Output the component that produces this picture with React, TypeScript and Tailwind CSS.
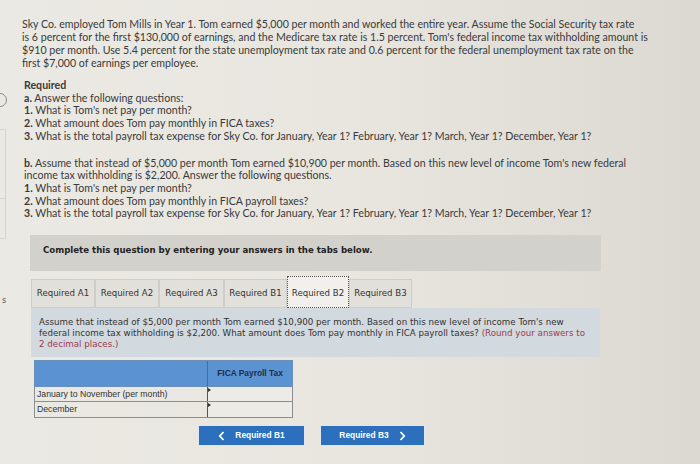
import React from "react";

const Chev = ({ dir }: { dir: "l" | "r" }) => (
  <svg width="7" height="10" viewBox="0 0 7 10" className="shrink-0">
    {dir === "l" ? (
      <path d="M5.5 1 L1.8 5 L5.5 9" fill="none" stroke="white" strokeWidth="1.8" />
    ) : (
      <path d="M1.5 1 L5.2 5 L1.5 9" fill="none" stroke="white" strokeWidth="1.8" />
    )}
  </svg>
);

export default function App() {
  const tabs = ["Required A1", "Required A2", "Required A3", "Required B1", "Required B2", "Required B3"];
  const widths = [64, 64, 65, 63, 62, 63];
  return (
    <div className="w-[700px] h-[464px] overflow-hidden flex bg-gradient-to-r from-[#ebe9e3] via-[#e8e6df] to-[#dcd9d2] text-[#333]">
      {/* left edge fragments */}
      <div className="w-[22px] shrink-0 flex flex-col">
        <div className="mt-[93px] -ml-[7px] w-[14px] h-[14px] rounded-full border border-[#8a8a8a]" />
        <div className="mt-[22px] h-[70px] border-r border-t border-b border-[#d6d4ce] w-[6px]" />
        <div className="h-[40px] border-r border-b border-[#d6d4ce] w-[6px]" />
        <div className="mt-[57px] pl-[2px] text-[8px] leading-[10px] text-[#555] font-['DejaVu_Sans',sans-serif]">s</div>
      </div>

      <div className="flex flex-col font-['Lato','Open_Sans',sans-serif]">
        <p className="pt-[18px] text-[10.6px] leading-[13px] text-[#3a3a3a]">
          Sky Co. employed Tom Mills in Year 1. Tom earned $5,000 per month and worked the entire year. Assume the Social Security tax rate
          <br />
          is 6 percent for the first $130,000 of earnings, and the Medicare tax rate is 1.5 percent. Tom's federal income tax withholding amount is
          <br />
          $910 per month. Use 5.4 percent for the state unemployment tax rate and 0.6 percent for the federal unemployment tax rate on the
          <br />
          first $7,000 of earnings per employee.
        </p>

        <div className="mt-[9px] pl-[2px] text-[10.6px] leading-[12.7px] text-[#3a3a3a]">
          <div className="font-bold">Required</div>
          <div><b>a.</b> Answer the following questions:</div>
          <div><b>1.</b> What is Tom's net pay per month?</div>
          <div><b>2.</b> What amount does Tom pay monthly in FICA taxes?</div>
          <div><b>3.</b> What is the total payroll tax expense for Sky Co. for January, Year 1? February, Year 1? March, Year 1? December, Year 1?</div>
          <div className="mt-[14px]">
            <b>b.</b> Assume that instead of $5,000 per month Tom earned $10,900 per month. Based on this new level of income Tom's new federal
            <br />
            income tax withholding is $2,200. Answer the following questions.
          </div>
          <div><b>1.</b> What is Tom's net pay per month?</div>
          <div><b>2.</b> What amount does Tom pay monthly in FICA payroll taxes?</div>
          <div><b>3.</b> What is the total payroll tax expense for Sky Co. for January, Year 1? February, Year 1? March, Year 1? December, Year 1?</div>
        </div>

        <div className="mt-[15px] ml-[8px] w-[571px] h-[36px] bg-[#d3d1cb] flex items-center pl-[13px] pb-[5px] font-['DejaVu_Sans',sans-serif] text-[8.6px] font-bold text-[#222]">
          Complete this question by entering your answers in the tabs below.
        </div>

        <div className="mt-[8px] ml-[9px] flex items-end h-[29px] font-['DejaVu_Sans',sans-serif] text-[8.6px] text-[#333]">
          {tabs.map((t, i) =>
            i === 4 ? (
              <div key={t} className="h-[32px] w-[62px] pt-[3px] bg-[#f1f0ec] border border-dotted border-[#555] flex items-center justify-center whitespace-nowrap">
                {t}
              </div>
            ) : (
              <div key={t} className="h-[29px] bg-[#e2e0da] border border-[#cfcdc7] flex items-center justify-center whitespace-nowrap" style={{ width: widths[i] }}>
                {t}
              </div>
            )
          )}
        </div>

        <div className="ml-[9px] w-[569px] h-[49px] bg-[#d2d9df] pt-[9px] pl-[8px] font-['DejaVu_Sans',sans-serif] text-[8.7px] leading-[11px] text-[#333]">
          Assume that instead of $5,000 per month Tom earned $10,900 per month. Based on this new level of income Tom's new
          <br />
          federal income tax withholding is $2,200. What amount does Tom pay monthly in FICA payroll taxes?{" "}
          <span className="text-[#9c3a4e]">(Round your answers to</span>
          <br />
          <span className="text-[#9c3a4e]">2 decimal places.)</span>
        </div>

        <div className="mt-[3px] ml-[12px] w-[259px] flex flex-col font-['Liberation_Sans',Arial,sans-serif] text-[8.7px] text-[#333]">
          <div className="flex h-[27px] bg-[#5b93d2] border border-[#6b8fb8]">
            <div className="w-[173px] border-r border-[#3f6fa8]" />
            <div className="flex-1 flex items-center justify-center font-bold text-[8.4px] text-[#1d2d4a]">FICA Payroll Tax</div>
          </div>
          <div className="flex h-[15px] border-l border-b border-r border-[#8d8d8d]">
            <div className="w-[172px] flex items-center pl-[2px]">January to November (per month)</div>
            <div className="relative flex-1 border-l border-[#555] bg-[#edebe6]">
              <div className="absolute left-0 top-[1px] w-0 h-0 border-t-[2px] border-b-[2px] border-l-[3px] border-t-transparent border-b-transparent border-l-[#333]" />
            </div>
          </div>
          <div className="flex h-[16px] border-l border-b border-r border-[#8d8d8d]">
            <div className="w-[172px] flex items-center pl-[2px]">December</div>
            <div className="relative flex-1 border-l border-[#555] bg-[#edebe6]">
              <div className="absolute left-0 top-[1px] w-0 h-0 border-t-[2px] border-b-[2px] border-l-[3px] border-t-transparent border-b-transparent border-l-[#333]" />
            </div>
          </div>
        </div>

        <div className="mt-[7px] ml-[176px] flex gap-[15px] font-['Liberation_Sans',Arial,sans-serif] text-[8.4px] font-bold text-white">
          <div className="w-[107px] h-[21px] bg-[#2b6fbd] border border-[#dfe6ee] flex items-center justify-center gap-[10px]">
            <Chev dir="l" />
            <span>Required B1</span>
          </div>
          <div className="w-[105px] h-[21px] bg-[#2b6fbd] border border-[#dfe6ee] flex items-center justify-center gap-[10px]">
            <span>Required B3</span>
            <Chev dir="r" />
          </div>
        </div>
      </div>
    </div>
  );
}
